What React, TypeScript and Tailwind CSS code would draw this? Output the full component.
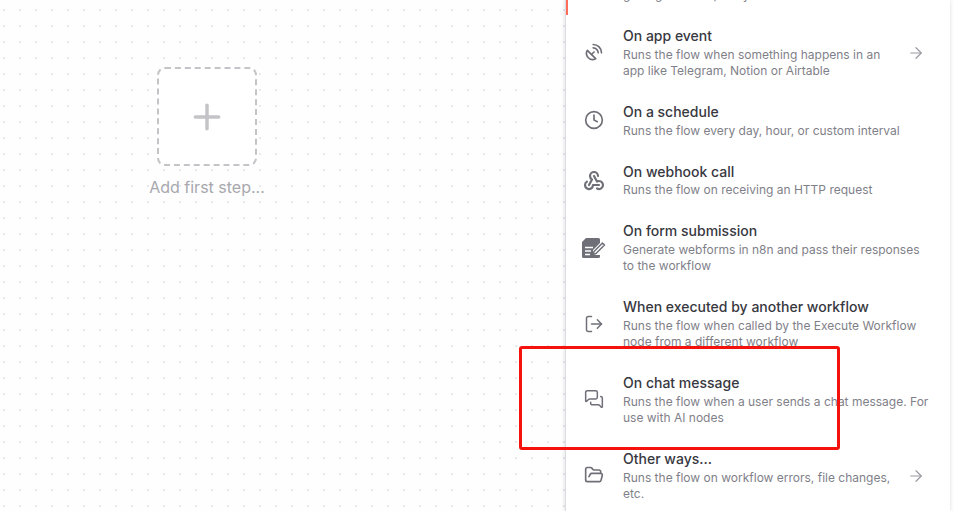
import { ArrowRight, Clock, FolderOpen, LogOut, MessagesSquare, Plus, SatelliteDish } from "lucide-react";
import { TbWebhook } from "react-icons/tb";
import type { ReactNode } from "react";

type Item = {
  title: string;
  desc: ReactNode;
  icon: ReactNode;
  arrow?: boolean;
};

// form icon: sheet with a pen over its right edge
const FormIcon = () => (
  <svg width="24" height="20" viewBox="0 0 24 20" fill="none">
    <path d="M4 0h12.5a1.5 1.5 0 0 1 1.5 1.5V5l-7 7v5h7v1.5a1.5 1.5 0 0 1-1.5 1.5h-15A1.500 1.500 0 0 1 0 18.500V4z" fill="currentColor" />
    <path d="M3 9.500h8M3 13h6M3 16.500h5" stroke="#fff" strokeWidth="1.400" />
    <path d="M12 13.500l8.500-8.500 2 2-8.500 8.500-3 1z" stroke="currentColor" strokeWidth="1.500" strokeLinejoin="round" />
  </svg>
);

const items: Item[] = [
  {
    title: "Trigger manually",
    desc: (
      <>
        Runs the flow on clicking a button in n8n. Good for
        <br />
        getting started quickly
      </>
    ),
    icon: null,
  },
  {
    title: "On app event",
    desc: "Runs the flow when something happens in an app like Telegram, Notion or Airtable",
    icon: <SatelliteDish size={20} strokeWidth={2} />,
    arrow: true,
  },
  {
    title: "On a schedule",
    desc: "Runs the flow every day, hour, or custom interval",
    icon: <Clock size={20} strokeWidth={2} />,
  },
  {
    title: "On webhook call",
    desc: "Runs the flow on receiving an HTTP request",
    icon: <TbWebhook size={24} strokeWidth={2.2} />,
  },
  {
    title: "On form submission",
    desc: "Generate webforms in n8n and pass their responses to the workflow",
    icon: <FormIcon />,
  },
  {
    title: "When executed by another workflow",
    desc: "Runs the flow when called by the Execute Workflow node from a different workflow",
    icon: <LogOut size={20} strokeWidth={1.800} />,
  },
  {
    title: "On chat message",
    desc: "Runs the flow when a user sends a chat message. For use with AI nodes",
    icon: <MessagesSquare size={20} strokeWidth={1.800} />,
  },
  {
    title: "Other ways...",
    desc: "Runs the flow on workflow errors, file changes, etc.",
    icon: <FolderOpen size={20} strokeWidth={2} />,
    arrow: true,
  },
];

export default function App() {
  return (
    <div className="relative flex h-[511px] w-[954px] overflow-hidden bg-white font-['Inter',sans-serif]">
      {/* canvas */}
      <div className="relative flex-1 bg-[#fefefe] bg-[radial-gradient(ellipse_1.500px_1px_at_4px_10px,#e8e8ec_60%,transparent)] bg-[length:16px_16px]">
        <div className="ml-[148px] mt-[67px] flex w-[118px] flex-col items-center">
          <div className="flex h-[99px] w-[100px] items-center justify-center rounded-lg border-2 border-dashed border-[#c4c4c8] bg-white text-[#c4c4c8]">
            <Plus size={40} strokeWidth={2.1} />
          </div>
          <div className="mt-[11px] whitespace-nowrap text-[16px] leading-[20px] text-[#a8a8ae]">Add first step...</div>
        </div>
      </div>

      {/* node creator panel */}
      <div className="relative h-full w-[385px] shrink-0 overflow-hidden border-l border-[#dcdce4] bg-white shadow-[0_0_4px_rgba(0,0,0,0.15)]">
        <div className="-mt-[61.3px]">
          {items.map((item, i) => (
            <div key={item.title} className="relative flex items-center py-[11.5px] pl-4 pr-5">
              {i === 0 && <div className="absolute bottom-0 left-0 top-0 w-[2px] bg-[#ff6d5a]" />}
              <div className="flex w-6 shrink-0 justify-center text-[#6f6f78]">{item.icon}</div>
              <div className="ml-[17px] min-w-0 flex-1">
                <div className="text-[14px] font-medium leading-[20px] text-[#38383f]">{item.title}</div>
                <div className={`mt-[0.8px] text-[12px] leading-[16px] text-[#7f7f89] ${item.arrow ? "pr-8" : ""}`}>{item.desc}</div>
              </div>
              {item.arrow && (
                <div className="absolute right-[25px] top-1/2 mt-px -translate-y-1/2 text-[#9a9aa2]">
                  <ArrowRight size={18} strokeWidth={1.6} />
                </div>
              )}
            </div>
          ))}
        </div>
      </div>
      <div className="w-1 shrink-0 bg-white" />

      {/* red annotation */}
      <div className="absolute left-[519px] top-[346px] h-[104px] w-[321px] rounded-[3px] border-[3px] border-[#f5120c]" />
    </div>
  );
}
